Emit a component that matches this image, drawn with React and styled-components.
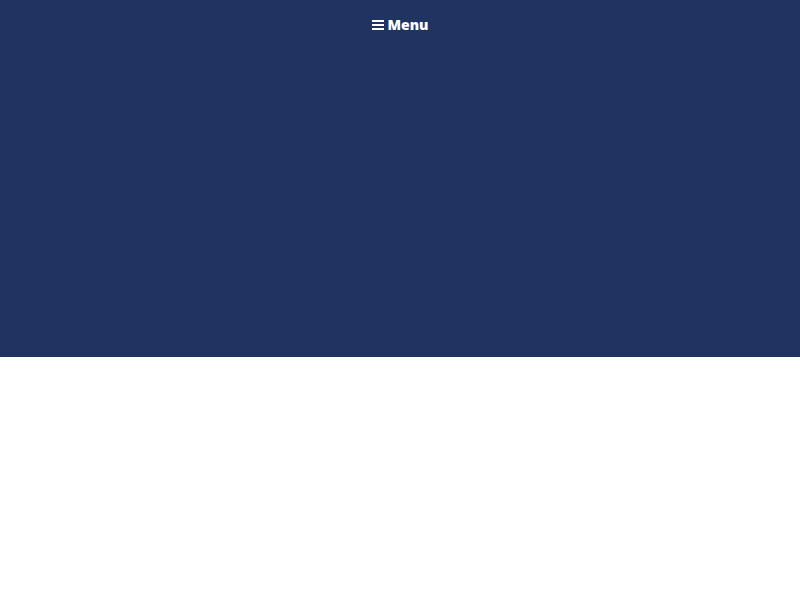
import React from "react";
import styled, { createGlobalStyle } from "styled-components";

const Global = createGlobalStyle`
  html, body { margin: 0; padding: 0; background: #ffffff; }
  body { font-family: "Open Sans", "Liberation Sans", sans-serif; }
`;

const Hero = styled.header`
  height: 357px;
  background: #1f3461;
  display: flex;
  justify-content: center;
  align-items: flex-start;
`;

const MenuButton = styled.button`
  margin-top: 14px;
  display: flex;
  align-items: center;
  gap: 4px;
  background: none;
  border: none;
  padding: 0;
  color: #ffffff;
  font-family: "Open Sans", "Liberation Sans", sans-serif;
  font-weight: 800;
  font-size: 14px;
  line-height: 22px;
  cursor: pointer;
`;

const Bars = styled.svg`
  width: 12px;
  height: 12px;
  display: block;
`;

export default function App() {
  return (
    <>
      <Global />
      <Hero>
        <MenuButton>
          <Bars viewBox="0 0 12 12">
            <rect x="0" y="1" width="12" height="2" fill="#fff" />
            <rect x="0" y="5" width="12" height="2" fill="#fff" />
            <rect x="0" y="9" width="12" height="2" fill="#fff" />
          </Bars>
          Menu
        </MenuButton>
      </Hero>
    </>
  );
}
